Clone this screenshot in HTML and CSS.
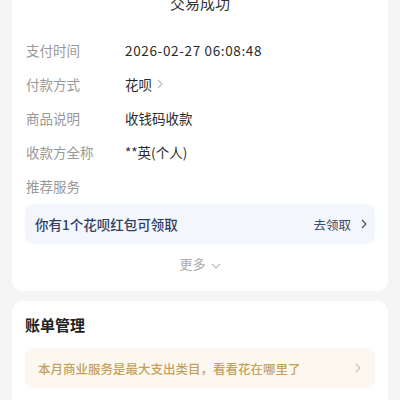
FILE: index.html
```html
<!DOCTYPE html>
<html lang="zh-CN">
<head>
  <meta charset="UTF-8">
  <title>账单详情</title>
  <link rel="stylesheet" href="styles.css">
</head>
<body>

  <div class="card detail-card">
    <h2 class="status">交易成功</h2>

    <div class="info-list">
      <div class="info-row">
        <span class="label">支付时间</span>
        <span class="value date">2026-02-27 06:08:48</span>
      </div>
      <div class="info-row">
        <span class="label">付款方式</span>
        <span class="value">花呗
          <svg class="chev small" viewBox="0 0 6 10"><polyline points="1,1 5,5 1,9"/></svg>
        </span>
      </div>
      <div class="info-row">
        <span class="label">商品说明</span>
        <span class="value">收钱码收款</span>
      </div>
      <div class="info-row">
        <span class="label">收款方全称</span>
        <span class="value">**英(个人)</span>
      </div>
      <div class="info-row">
        <span class="label">推荐服务</span>
      </div>
    </div>

    <div class="promo promo-blue">
      <span>你有1个花呗红包可领取</span>
      <span class="promo-action">去领取
        <svg class="chev" viewBox="0 0 6 10"><polyline points="1,1 5,5 1,9"/></svg>
      </span>
    </div>

    <div class="more">更多
      <svg class="chev-down" viewBox="0 0 10 6"><polyline points="1,1 5,5 9,1"/></svg>
    </div>
  </div>

  <div class="card bill-card">
    <h3 class="card-title">账单管理</h3>
    <div class="promo promo-gold">
      <span>本月商业服务是最大支出类目，看看花在哪里了</span>
      <svg class="chev" viewBox="0 0 6 10"><polyline points="1,1 5,5 1,9"/></svg>
    </div>
  </div>

</body>
</html>
```

FILE: styles.css
```css
* {
  margin: 0;
  padding: 0;
  box-sizing: border-box;
}

body {
  background: #f5f5f5;
  font-family: "Noto Sans CJK SC", "Noto Sans", sans-serif;
  padding: 0 12px;
  overflow: hidden;
}

.card {
  background: #fff;
  border-radius: 10px;
  padding: 0 13px;
}

.detail-card {
  margin-top: -15px;
  padding-top: 8px;
  padding-bottom: 17px;
}

.status {
  text-align: center;
  font-size: 15px;
  font-weight: 400;
  line-height: 20px;
  color: #333;
}

.info-list {
  margin-top: 20px;
}

.info-row {
  display: flex;
  align-items: center;
  height: 34px;
  font-size: 13.5px;
}

.label {
  width: 100px;
  padding-left: 1px;
  color: #999;
}

.value {
  display: flex;
  align-items: center;
  gap: 5px;
  color: #2b2b2b;
}

.value.date {
  letter-spacing: 0.65px;
}

.chev {
  width: 6px;
  height: 10px;
  fill: none;
  stroke: #666;
  stroke-width: 1.1;
}

.chev.small {
  stroke: #bbb;
}

.promo {
  display: flex;
  align-items: center;
  justify-content: space-between;
  height: 40px;
  border-radius: 8px;
}

.promo-blue {
  margin-top: 1px;
  padding: 0 8px 0 10px;
  background: #f3f6fb;
  color: #2f3f63;
  font-size: 13.5px;
  font-weight: 500;
}

.promo-action {
  display: flex;
  align-items: center;
  gap: 10px;
  color: #3d4a66;
  font-size: 12.5px;
  font-weight: 400;
}

.promo-action .chev {
  stroke: #3d4a66;
}

.more {
  margin-top: 10px;
  display: flex;
  align-items: center;
  justify-content: center;
  gap: 5px;
  line-height: 20px;
  font-size: 13px;
  color: #aaa;
}

.chev-down {
  width: 10px;
  height: 6px;
  margin-top: 3px;
  fill: none;
  stroke: #bbb;
  stroke-width: 1.1;
}

.bill-card {
  margin-top: 10px;
  padding-top: 14px;
  padding-bottom: 20px;
}

.card-title {
  font-size: 15px;
  font-weight: 700;
  line-height: 20px;
  color: #222;
}

.promo-gold {
  margin-top: 13px;
  padding: 0 14px 0 13px;
  background: #fcf8f0;
  color: #c4a15c;
  font-size: 12.5px;
  font-weight: 500;
}

.promo-gold .chev {
  stroke: #c8c0b0;
}
```
